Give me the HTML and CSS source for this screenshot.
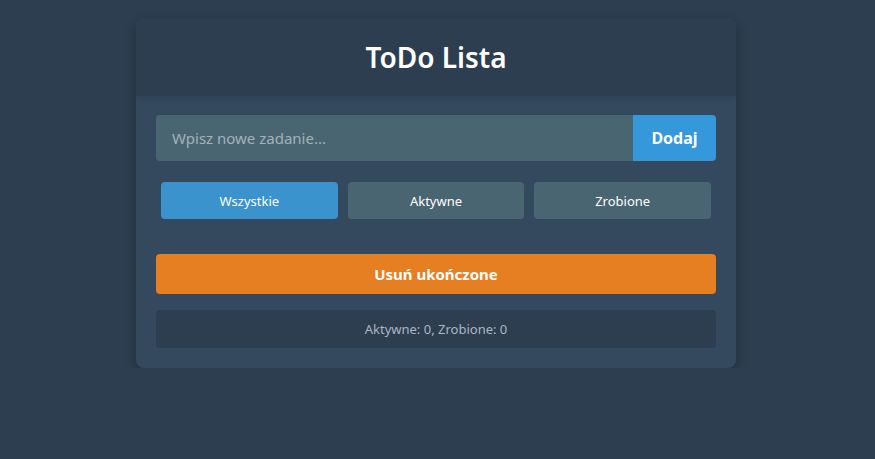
FILE: index.html
```html
<!DOCTYPE html>
<html lang="pl">
<head>
<meta charset="utf-8">
<title>ToDo Lista</title>
<link rel="stylesheet" href="styles.css">
</head>
<body>
<div class="app">
  <header class="app-header">
    <h1>ToDo Lista</h1>
  </header>
  <main class="app-body">
    <div class="add-row">
      <input class="task-input" type="text" placeholder="Wpisz nowe zadanie...">
      <button class="add-btn">Dodaj</button>
    </div>
    <div class="filters">
      <button class="filter active">Wszystkie</button>
      <button class="filter">Aktywne</button>
      <button class="filter">Zrobione</button>
    </div>
    <ul class="task-list"></ul>
    <button class="clear-btn">Usuń ukończone</button>
    <div class="stats">Aktywne: 0, Zrobione: 0</div>
  </main>
</div>
</body>
</html>
```
FILE: styles.css
```css
* { box-sizing: border-box; }
html, body { margin: 0; padding: 0; }
body {
  background: #2c3e50;
  font-family: "Noto Sans", "Open Sans", sans-serif;
  color: #fff;
  padding: 18px 3px 0 0;
}
.app {
  width: 600px;
  margin: 0 auto;
  background: #34495e;
  border-radius: 8px;
  overflow: hidden;
  box-shadow: 0 4px 12px rgba(0,0,0,0.25);
}
.app-header {
  background: #2c3e50;
  height: 78px;
  display: flex;
  align-items: center;
  justify-content: center;
  box-shadow: 0 2px 6px rgba(0,0,0,0.12);
  position: relative;
}
.app-header h1 {
  margin: 0;
  font-size: 28px;
  font-weight: 600;
  color: #fff;
}
.app-body {
  padding: 19px 20px 20px;
}
.add-row {
  display: flex;
  height: 46px;
}
.task-input {
  flex: 1;
  border: none;
  outline: none;
  background: #4a6572;
  color: #fff;
  font-family: inherit;
  font-size: 15px;
  padding: 0 16px;
  border-radius: 4px 0 0 4px;
}
.task-input::placeholder { color: #a3b1b8; }
.add-btn {
  width: 83px;
  border: none;
  background: #3498db;
  color: #fff;
  font-family: inherit;
  font-size: 16px;
  font-weight: 700;
  border-radius: 0 4px 4px 0;
}
.filters {
  display: flex;
  margin-top: 21px;
}
.filter {
  flex: 1;
  margin: 0 5px;
  height: 37px;
  border: none;
  border-radius: 4px;
  background: #4a6572;
  color: #fff;
  font-family: inherit;
  font-size: 13px;
}
.filter.active { background: #3b93cd; }
.task-list {
  list-style: none;
  margin: 0;
  padding: 0;
  height: 35px;
}
.clear-btn {
  display: block;
  width: 100%;
  height: 40px;
  border: none;
  border-radius: 4px;
  background: #e67e22;
  color: #fff;
  font-family: inherit;
  font-size: 15px;
  font-weight: 700;
}
.stats {
  margin-top: 16px;
  height: 38px;
  background: #2c3e50;
  border-radius: 4px;
  display: flex;
  align-items: center;
  justify-content: center;
  color: #aab7c4;
  font-size: 13px;
}
```
